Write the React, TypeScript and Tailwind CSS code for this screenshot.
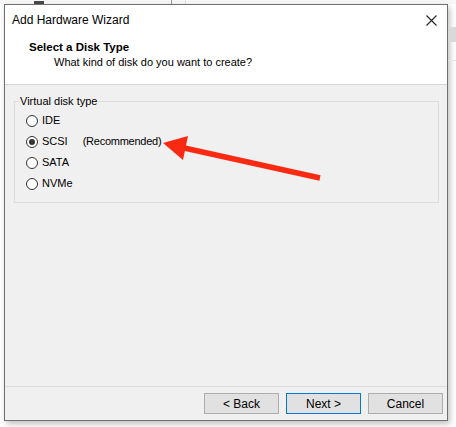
import React from "react";

const options = [
  { label: "IDE", checked: false },
  { label: "SCSI", checked: true, note: "(Recommended)" },
  { label: "SATA", checked: false },
  { label: "NVMe", checked: false },
];

function Radio({ checked }: { checked: boolean }) {
  return (
    <span className="w-[12px] h-[12px] rounded-full border border-[#333] bg-white flex items-center justify-center shrink-0">
      {checked && <span className="w-[6px] h-[6px] rounded-full bg-[#333]" />}
    </span>
  );
}

function Button({ label, primary }: { label: string; primary?: boolean }) {
  return (
    <button
      className={
        "w-[75px] h-[21px] bg-[#e1e1e1] text-[12px] text-black leading-none border " +
        (primary ? "border-[#0078d7]" : "border-[#adadad]")
      }
    >
      {label}
    </button>
  );
}

export default function App() {
  return (
    <div className="relative w-[456px] h-[427px] overflow-hidden bg-white font-['Liberation_Sans',Arial,sans-serif] text-black">
      {/* backdrop strip */}
      <div className="h-[4px] flex bg-[#f7f7f7]">
        <div className="w-[34px]" />
        <div className="w-[10px] h-[3px] bg-[#4a4a4a] mt-[1px]" />
        <div className="w-[127px]" />
        <div className="w-px bg-[#9a9a9a]" />
        <div className="w-[13px]" />
        <div className="w-px bg-[#e0e0e0]" />
      </div>

      <div className="flex">
        <div className="w-[4px]" />

        {/* window */}
        <div className="w-[444px] h-[417px] border border-[#707070] bg-[#f0f0f0] flex flex-col shadow-[2px_3px_6px_rgba(0,0,0,0.25)]">
          <div className="bg-white border-b border-[#d5d5d5] h-[80px] flex flex-col">
            <div className="h-[30px] flex items-center justify-between pl-[7px] pr-[10px]">
              <span className="text-[12px]">Add Hardware Wizard</span>
              <svg width="11" height="11" viewBox="0 0 11 11">
                <path d="M0.5 0.5 L10.5 10.5 M10.5 0.5 L0.5 10.5" stroke="#222" strokeWidth="1.1" />
              </svg>
            </div>
            <div className="pl-[24px] pt-[5px] text-[11.5px] leading-[15px] font-bold">Select a Disk Type</div>
            <div className="pl-[49px] text-[11px] leading-[15px]">What kind of disk do you want to create?</div>
          </div>

          <div className="flex-1 px-[9px] pt-[9px]">
            <fieldset className="border border-[#dcdcdc] w-[425px] h-[109px]">
              <legend className="text-[11px] leading-[14px] ml-[4px] px-[1px]">Virtual disk type</legend>
              <div className="flex flex-col pl-[11px] pt-[2px]">
                {options.map((o) => (
                  <label key={o.label} className="h-[21px] flex items-center text-[11px]">
                    <Radio checked={o.checked} />
                    <span className="ml-[4px]">{o.label}</span>
                    {o.note && <span className="ml-[15px] tracking-[-0.25px]">{o.note}</span>}
                  </label>
                ))}
              </div>
            </fieldset>
          </div>

          <div className="h-[34px] border-t border-[#dcdcdc] flex items-start justify-end gap-[7px] pt-[6px] pr-[4px]">
            <Button label="< Back" />
            <Button label="Next >" primary />
            <Button label="Cancel" />
          </div>
        </div>

        {/* backdrop right */}
        <div className="flex-1 flex flex-col">
          <div className="h-[23px]" />
          <div className="h-[15px] bg-[#d9d9d9]" />
          <div className="h-[18px]" />
          <div className="h-px bg-[#e6e6e6]" />
        </div>
      </div>

      <svg className="absolute inset-0 pointer-events-none" width="456" height="427">
        <line x1="320" y1="178" x2="182" y2="147.5" stroke="#fa2a12" strokeWidth="5.5" strokeLinecap="butt" />
        <polygon points="163,143 188,136 183,160" fill="#fa2a12" />
      </svg>
    </div>
  );
}
